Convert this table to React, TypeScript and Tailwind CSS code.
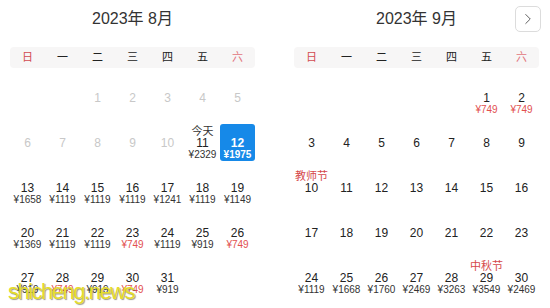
import { ChevronRight } from 'lucide-react';

type Day = {
  n: number;
  price?: number;
  red?: boolean;
  label?: string;
  labelRed?: boolean;
  disabled?: boolean;
  selected?: boolean;
};

const WEEK = ['日', '一', '二', '三', '四', '五', '六'];

const august: (Day | null)[] = [
  null, null,
  { n: 1, disabled: true }, { n: 2, disabled: true }, { n: 3, disabled: true }, { n: 4, disabled: true }, { n: 5, disabled: true },
  { n: 6, disabled: true }, { n: 7, disabled: true }, { n: 8, disabled: true }, { n: 9, disabled: true }, { n: 10, disabled: true },
  { n: 11, price: 2329, label: '今天' }, { n: 12, price: 1975, selected: true },
  { n: 13, price: 1658 }, { n: 14, price: 1119 }, { n: 15, price: 1119 }, { n: 16, price: 1119 }, { n: 17, price: 1241 }, { n: 18, price: 1119 }, { n: 19, price: 1149 },
  { n: 20, price: 1369 }, { n: 21, price: 1119 }, { n: 22, price: 1119 }, { n: 23, price: 749, red: true }, { n: 24, price: 1119 }, { n: 25, price: 919 }, { n: 26, price: 749, red: true },
  { n: 27, price: 919 }, { n: 28, price: 749, red: true }, { n: 29, price: 919 }, { n: 30, price: 749, red: true }, { n: 31, price: 919 },
];

const september: (Day | null)[] = [
  null, null, null, null, null,
  { n: 1, price: 749, red: true }, { n: 2, price: 749, red: true },
  ...[3, 4, 5, 6, 7, 8, 9].map((n) => ({ n })),
  { n: 10, label: '教师节', labelRed: true },
  ...[11, 12, 13, 14, 15, 16, 17, 18, 19, 20, 21, 22, 23].map((n) => ({ n })),
  { n: 24, price: 1119 }, { n: 25, price: 1668 }, { n: 26, price: 1760 }, { n: 27, price: 2469 }, { n: 28, price: 3263 },
  { n: 29, price: 3549, label: '中秋节', labelRed: true }, { n: 30, price: 2469 },
];

function Cell({ day }: { day: Day | null }) {
  if (!day) return <div className="h-[37px]" />;
  const box = day.selected ? 'bg-[#1689e8] text-white rounded-[3px]' : '';
  const numColor = day.disabled ? 'text-[#c8c8c8]' : day.selected ? 'text-white' : 'text-[#222]';
  const priceColor = day.selected ? 'text-white font-bold' : day.red ? 'text-[#e2514f]' : 'text-[#333]';
  return (
    <div className={`h-[37px] flex flex-col items-center pt-[1px] ${box}`}>
      <div className={`h-[12px] text-[11px] leading-[12px] whitespace-nowrap ${day.labelRed ? 'text-[#d5484a]' : 'text-[#333]'}`}>
        {day.label ?? ''}
      </div>
      <div className={`h-[12px] text-[12px] leading-[12px] ${numColor} ${day.selected ? 'font-bold' : ''}`}>{day.n}</div>
      {day.price !== undefined && (
        <div className={`h-[12px] text-[10px] leading-[12px] whitespace-nowrap ${priceColor}`}>¥{day.price}</div>
      )}
    </div>
  );
}

function Month({ title, days }: { title: string; days: (Day | null)[] }) {
  return (
    <div className="w-[245px] flex flex-col">
      <div className="h-[38px] flex items-center justify-center text-[16px] text-[#333]">{title}</div>
      <div className="mt-[9px] h-[21px] rounded-[4px] bg-[#f7f6f6] grid grid-cols-7 items-center text-[11px]">
        {WEEK.map((w, i) => (
          <div
            key={w}
            className={`text-center ${i === 0 ? 'text-[#d24b50]' : i === 6 ? 'text-[#e2757c]' : 'text-[#222]'}`}
          >
            {w}
          </div>
        ))}
      </div>
      <div className="mt-[11px] grid grid-cols-7 gap-y-[8px]">
        {days.map((d, i) => (
          <Cell key={i} day={d} />
        ))}
      </div>
    </div>
  );
}

export default function App() {
  return (
    <div
      className="relative w-[550px] h-[308px] bg-white overflow-hidden"
      style={{ fontFamily: '"Liberation Sans", "Noto Sans CJK SC", sans-serif' }}
    >
      <div className="flex pl-[10px] gap-[39px]">
        <Month title="2023年 8月" days={august} />
        <Month title="2023年 9月" days={september} />
      </div>

      <button className="absolute left-[515px] top-[6px] w-[26px] h-[26px] rounded-[5px] border border-[#dcdcdc] flex items-center justify-center text-[#555] bg-white">
        <ChevronRight size={18} strokeWidth={1.25} />
      </button>

      <div
        className="absolute left-[8px] top-[281px] text-[22px] tracking-[-1.5px] text-[#e6dc2c] leading-none"
        style={{ textShadow: '1px 1px 1px rgba(90,90,60,0.6)' }}
      >
        shicheng.news
      </div>
    </div>
  );
}
